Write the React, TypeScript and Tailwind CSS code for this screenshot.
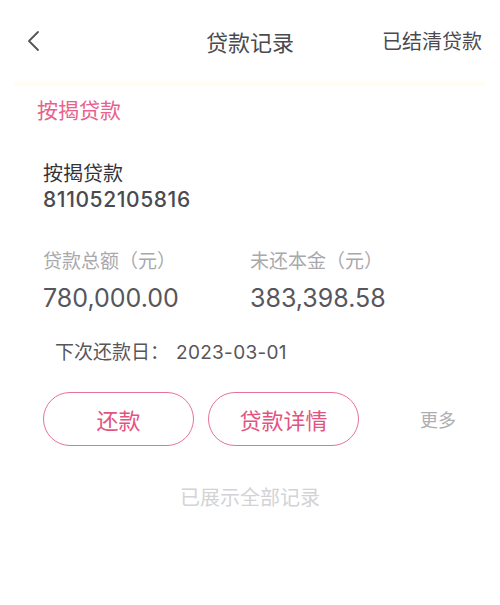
import React from 'react';

const font = { fontFamily: '"Noto Sans CJK SC", "Noto Sans", sans-serif' };
const numFont = { fontFamily: 'Inter, "Noto Sans CJK SC", sans-serif' };

const App: React.FC = () => {
  return (
    <div className="w-[500px] h-[605px] bg-white overflow-hidden" style={font}>
      {/* top bar */}
      <div className="relative h-[82px] flex items-center justify-between pl-[26px] pr-[18px]">
        <svg width="14" height="22" viewBox="0 0 14 22" fill="none">
          <path d="M12 2L3 11l9 9" stroke="#555" strokeWidth="1.8" strokeLinecap="round" strokeLinejoin="round" />
        </svg>
        <span className="absolute left-1/2 -translate-x-1/2 text-[22px] text-[#4a4a4f] leading-none">贷款记录</span>
        <span className="text-[20px] text-[#4a4a4f] leading-none">已结清贷款</span>
      </div>
      <div className="h-[4px] mx-[15px] bg-[#fffdf3]" />

      <div className="px-[37px] pt-[10px]">
        <div className="text-[21px] leading-[26px] text-[#e8618c]">按揭贷款</div>
      </div>

      {/* loan card */}
      <div className="px-[43px] pt-[37px]">
        <div className="text-[20px] leading-[27px] text-[#333338]">按揭贷款</div>
        <div className="text-[21px] leading-[27px] font-medium tracking-[0.6px] text-[#4a4a50]" style={numFont}>811052105816</div>

        <div className="grid grid-cols-[207px_1fr] mt-[35px]">
          <div>
            <div className="text-[19px] leading-[24px] text-[#a9a9ad]">贷款总额（元）</div>
            <div className="text-[25px] leading-[32px] mt-[10px] text-[#56565c]" style={numFont}>780,000.00</div>
          </div>
          <div>
            <div className="text-[19px] leading-[24px] text-[#a9a9ad]">未还本金（元）</div>
            <div className="text-[25px] leading-[32px] mt-[10px] text-[#56565c]" style={numFont}>383,398.58</div>
          </div>
        </div>

        <div className="mt-[25px] pl-[12px] text-[19px] leading-[24px] text-[#56565c]">
          下次还款日：<span style={numFont} className="ml-[7px] tracking-[0.3px]">2023-03-01</span>
        </div>

        <div className="flex items-center mt-[27px]">
          <button className="w-[151px] h-[54px] rounded-full border border-[#e5729a] text-[#e2537f] text-[22px]">还款</button>
          <button className="ml-[14px] w-[151px] h-[54px] rounded-full border border-[#e5729a] text-[#e2537f] text-[22px]">贷款详情</button>
          <span className="ml-[61px] text-[18px] text-[#aeaeb2]">更多</span>
        </div>
      </div>

      <div className="mt-[38px] text-center text-[20px] leading-[26px] text-[#d3d3d6]">已展示全部记录</div>
    </div>
  );
};

export default App;
